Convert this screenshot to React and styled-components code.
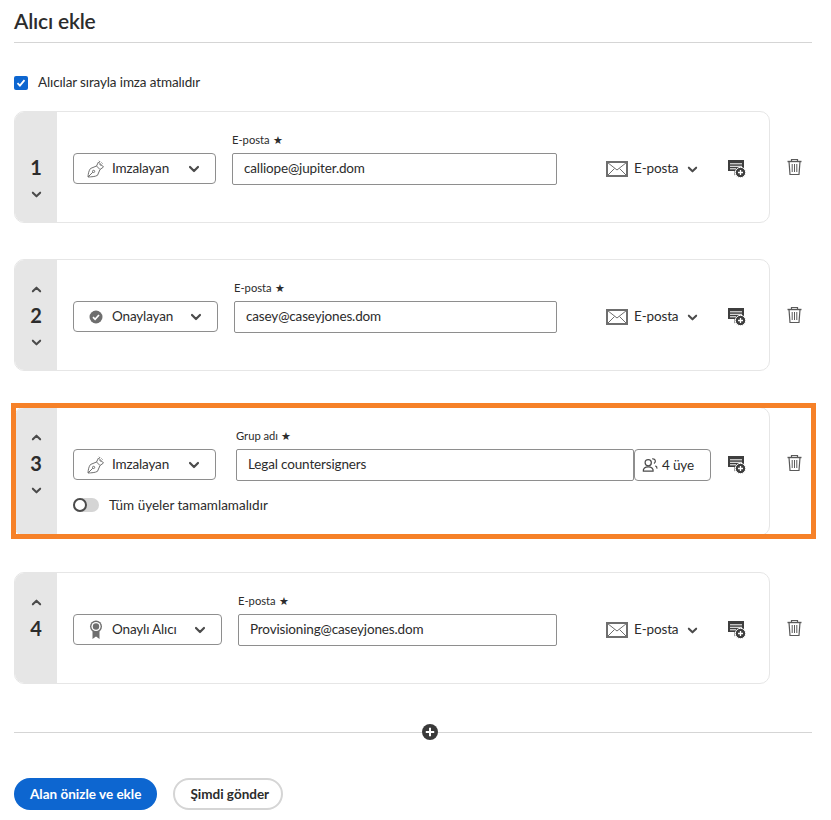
import React from "react";
import styled, { createGlobalStyle } from "styled-components";

const GlobalStyle = createGlobalStyle`
  html, body {
    margin: 0;
    padding: 0;
    background: #fff;
  }
  body {
    font-family: "Lato", "Open Sans", sans-serif;
    color: #2c2c2c;
  }
`;

const Page = styled.div`
  width: 798px;
  height: 820px;
  padding: 0 19px 0 14px;
  overflow: hidden;
`;

const Title = styled.h1`
  margin: 0;
  padding-top: 8px;
  box-sizing: border-box;
  height: 43px;
  font-size: 21px;
  line-height: 26px;
  font-weight: 600;
  letter-spacing: -0.2px;
  color: #2c2c2c;
  border-bottom: 1px solid #d5d5d5;
`;

const SequenceRow = styled.label`
  display: flex;
  align-items: center;
  gap: 10px;
  height: 20px;
  margin-top: 30px;
  font-size: 13.5px;
  letter-spacing: -0.13px;
`;

const SequenceText = styled.span`
  padding-bottom: 2px;
`;

const CheckBox = styled.span`
  width: 14px;
  height: 14px;
  border-radius: 2px;
  background: #0d66d0;
  display: flex;
  align-items: center;
  justify-content: center;
`;

const RecipientList = styled.div`
  display: flex;
  flex-direction: column;
  gap: 36px;
  margin-top: 18px;
`;

const Row = styled.div`
  position: relative;
  display: flex;
  align-items: stretch;
`;

const Highlight = styled.div`
  position: absolute;
  left: -3px;
  top: -4px;
  width: 805px;
  bottom: -3px;
  border: 5px solid #f68128;
  box-sizing: border-box;
  pointer-events: none;
`;

const Card = styled.div`
  width: 756px;
  min-height: 112px;
  box-sizing: border-box;
  display: flex;
  border: 1px solid #e6e6e6;
  border-radius: 10px;
  overflow: hidden;
  background: #fff;
`;

const Rail = styled.div`
  width: 42px;
  flex: none;
  background: #e6e6e6;
  display: grid;
  grid-template-rows: 18px 36px 16px;
  justify-items: center;
  align-items: center;
  align-content: start;
  padding-top: 19px;
`;

const OrderNumber = styled.div`
  font-size: 20px;
  font-weight: 700;
  line-height: 36px;
  color: #2c2c2c;
`;

const Body = styled.div`
  flex: 1;
  display: flex;
  flex-direction: column;
  padding: 21px 0 22px 16px;
`;

const Fields = styled.div`
  display: flex;
  align-items: flex-end;
`;

const RoleSelect = styled.div`
  width: ${(p) => p.$width}px;
  height: 31px;
  flex: none;
  box-sizing: border-box;
  margin: 0 ${(p) => p.$gap}px 1px 0;
  border: 1px solid #8e8e8e;
  border-radius: 4px;
  display: flex;
  align-items: center;
  padding: 0 15px 0 13px;
  font-size: 13.5px;
  letter-spacing: -0.15px;
`;

const RoleIcon = styled.span`
  width: 18px;
  height: 18px;
  display: flex;
  align-items: center;
  justify-content: center;
  margin-right: 7px;
`;

const RoleLabel = styled.span`
  flex: 1;
  padding-bottom: 2px;
`;

const Field = styled.div`
  width: ${(p) => p.$width}px;
  flex: none;
  display: flex;
  flex-direction: column;
`;

const FieldLabel = styled.div`
  height: 20px;
  line-height: 14px;
  font-size: 11.2px;
  color: #2c2c2c;
`;

const Required = styled.span`
  margin-left: 3px;
  font-size: 11px;
`;

const TextInput = styled.div`
  height: 32px;
  box-sizing: border-box;
  border: 1px solid #8e8e8e;
  border-radius: 2px;
  display: flex;
  align-items: center;
  padding: 0 11px 3px;
  font-size: 13.5px;
  letter-spacing: -0.15px;
`;

const MembersButton = styled.div`
  width: 77px;
  height: 32px;
  flex: none;
  box-sizing: border-box;
  border: 1px solid #8e8e8e;
  border-radius: 4px;
  display: flex;
  align-items: center;
  gap: 4px;
  padding-left: 7px;
  font-size: 13.5px;
  letter-spacing: -0.15px;
`;

const ChannelMenu = styled.div`
  width: 122px;
  height: 32px;
  flex: none;
  margin-left: 49px;
  display: flex;
  align-items: center;
  font-size: 13.5px;
  letter-spacing: -0.15px;
`;

const ChannelLabel = styled.span`
  margin: 0 9px 0 6px;
  padding-bottom: 3px;
`;

const NoteButton = styled.div`
  height: 32px;
  flex: none;
  display: flex;
  align-items: center;
  margin-left: ${(p) => p.$left}px;
`;

const ToggleRow = styled.div`
  display: flex;
  align-items: center;
  gap: 10px;
  margin-top: 16px;
  height: 16px;
  font-size: 13.5px;
`;

const ToggleTrack = styled.span`
  position: relative;
  display: block;
  width: 26px;
  height: 14px;
  border-radius: 7px;
  background: #d5d5d5;
`;

const ToggleKnob = styled.span`
  position: absolute;
  left: 0;
  top: 0;
  width: 14px;
  height: 14px;
  box-sizing: border-box;
  border-radius: 50%;
  border: 2px solid #4b4b4b;
  background: #fff;
`;

const DeleteColumn = styled.div`
  margin-left: 17px;
  padding-top: 47px;
`;

const AddRow = styled.div`
  display: flex;
  align-items: center;
  height: 22px;
  margin-top: 37px;
`;

const AddLine = styled.div`
  flex: ${(p) => (p.$width ? `0 0 ${p.$width}px` : "1")};
  height: 1px;
  background: #d5d5d5;
`;

const AddButton = styled.div`
  width: 16px;
  height: 16px;
  display: flex;
  background: #fff;
`;

const Actions = styled.div`
  display: flex;
  gap: 16px;
  margin-top: 35px;
`;

const PrimaryButton = styled.div`
  height: 32px;
  box-sizing: border-box;
  padding: 0 16px;
  border-radius: 16px;
  background: #0d66d0;
  color: #fff;
  font-size: 13.5px;
  font-weight: 700;
  display: flex;
  align-items: center;
`;

const SecondaryButton = styled.div`
  height: 32px;
  box-sizing: border-box;
  padding: 0 12px 0 15px;
  border-radius: 16px;
  border: 2px solid #d5d5d5;
  color: #2c2c2c;
  font-size: 13.5px;
  font-weight: 700;
  display: flex;
  align-items: center;
`;

const Chevron = ({ up, size = 11 }) => (
  <svg width={size} height={size} viewBox="0 0 12 12" fill="none">
    <path
      d={up ? "M2 8l4-4 4 4" : "M2 4l4 4 4-4"}
      stroke="#4b4b4b"
      strokeWidth="2.200"
      strokeLinecap="round"
      strokeLinejoin="round"
    />
  </svg>
);

const PenIcon = () => (
  <svg width="18" height="18" viewBox="0 0 18 18" fill="none" stroke="#707070" strokeWidth="1" strokeLinejoin="round">
    <path d="M1 17c.2-3.500.8-6.300 2.500-8.500L9.500 6l3.500 3.500-2.500 5.800C8 16.800 4.500 16.800 1 17z" />
    <path d="M1 17l4.800-4.800" />
    <circle cx="6.600" cy="11.400" r="1.100" />
    <path d="M9.500 6l2-4 5 5-3.500 2.500" />
    <path d="M12.500 4l2 2" />
    <path d="M12 .8l1.200 1.200M14.500 2.500l1 1" />
  </svg>
);

const ApproverIcon = () => (
  <svg width="14" height="14" viewBox="0 0 14 14">
    <circle cx="7" cy="7" r="6.500" fill="#6e6e6e" />
    <path d="M4 7.200l2.100 2.100L10 5" fill="none" stroke="#fff" strokeWidth="1.700" />
  </svg>
);

const CertifiedIcon = () => (
  <svg width="14" height="20" viewBox="0 0 14 20">
    <path d="M3.500 11v8l3.500-2.500 3.500 2.500v-8z" fill="#6e6e6e" />
    <circle cx="7" cy="6.500" r="6" fill="#6e6e6e" />
    <circle cx="7" cy="6.500" r="4.600" fill="#fff" />
    <circle cx="7" cy="6.500" r="3.200" fill="#6e6e6e" />
  </svg>
);

const MailIcon = () => (
  <svg width="22" height="16" viewBox="0 0 22 16" fill="none">
    <rect x="1" y="1" width="20" height="14" fill="#fff" stroke="#6e6e6e" strokeWidth="2" />
    <path d="M1.500 1.500l9.500 7.500 9.500-7.500M1.500 14.500l7-7M20.500 14.500l-7-7" stroke="#6e6e6e" strokeWidth="1" />
  </svg>
);

const NoteAddIcon = () => (
  <svg width="18" height="18" viewBox="0 0 18 18">
    <path d="M0 0h16v11h-5.500L6.500 15.500V11H0z" fill="#3e3e3e" />
    <path d="M2 3.800h12M2 6.300h12M2 8.800h6" stroke="#fff" strokeWidth="1" />
    <circle cx="12.500" cy="12.500" r="5.200" fill="#3e3e3e" stroke="#fff" strokeWidth="1" />
    <path d="M10 12.500h5M12.500 10v5" stroke="#fff" strokeWidth="1.300" />
  </svg>
);

const TrashIcon = () => (
  <svg width="15" height="18" viewBox="0 0 15 18" fill="none" stroke="#5a5a5a">
    <path d="M.5 3.500h14" strokeWidth="1.400" />
    <path d="M4.500 3.500V1.500h6v2" strokeWidth="1.200" />
    <path d="M2 3.500l1 13h9l1-13" strokeWidth="1.200" />
    <path d="M5.200 6v8M7.500 6v8M9.800 6v8" strokeWidth="1" />
  </svg>
);

const UsersIcon = () => (
  <svg width="16" height="16" viewBox="0 0 18 18" fill="none" stroke="#4b4b4b" strokeWidth="1.400">
    <circle cx="7" cy="6.500" r="3.500" />
    <path d="M1.500 16c-.5-3.200 2-5 5.500-5s6 1.800 5.500 5z" />
    <path d="M11.500 2.200a2.800 2.800 0 0 1 3.500 2.600c0 1.200-.7 2-1.600 2.500" />
    <path d="M15 10c1.300.5 2 1.500 1.800 3" />
  </svg>
);

const PlusCircle = () => (
  <svg width="16" height="16" viewBox="0 0 16 16">
    <circle cx="8" cy="8" r="8" fill="#3a3a3a" />
    <path d="M8 3.800v8.400M3.800 8h8.400" stroke="#fff" strokeWidth="2" />
  </svg>
);

const roleIcons = {
  signer: <PenIcon />,
  approver: <ApproverIcon />,
  certified: <CertifiedIcon />,
};

const recipients = [
  { id: 1, role: "Imzalayan", icon: "signer", selectWidth: 143, gap: 16, fieldWidth: 325, label: "E-posta", value: "calliope@jupiter.dom", down: true },
  { id: 2, role: "Onaylayan", icon: "approver", selectWidth: 145, gap: 16, fieldWidth: 323, label: "E-posta", value: "casey@caseyjones.dom", up: true, down: true },
  { id: 3, role: "Imzalayan", icon: "signer", selectWidth: 143, gap: 20, fieldWidth: 398, label: "Grup adı", value: "Legal countersigners", up: true, down: true, group: true },
  { id: 4, role: "Onaylı Alıcı", icon: "certified", selectWidth: 149, gap: 16, fieldWidth: 319, label: "E-posta", value: "Provisioning@caseyjones.dom", up: true },
];

const Recipient = ({ r }) => (
  <Row>
    <Card>
      <Rail>
        <span>{r.up && <Chevron up />}</span>
        <OrderNumber>{r.id}</OrderNumber>
        <span>{r.down && <Chevron />}</span>
      </Rail>
      <Body>
        <Fields>
          <RoleSelect $width={r.selectWidth} $gap={r.gap}>
            <RoleIcon>{roleIcons[r.icon]}</RoleIcon>
            <RoleLabel>{r.role}</RoleLabel>
            <Chevron size={12} />
          </RoleSelect>
          <Field $width={r.fieldWidth}>
            <FieldLabel>
              {r.label}
              <Required>★</Required>
            </FieldLabel>
            <TextInput>{r.value}</TextInput>
          </Field>
          {r.group ? (
            <>
              <MembersButton>
                <UsersIcon />4 üye
              </MembersButton>
              <NoteButton $left={17}>
                <NoteAddIcon />
              </NoteButton>
            </>
          ) : (
            <>
              <ChannelMenu>
                <MailIcon />
                <ChannelLabel>E-posta</ChannelLabel>
                <Chevron size={11} />
              </ChannelMenu>
              <NoteButton $left={0}>
                <NoteAddIcon />
              </NoteButton>
            </>
          )}
        </Fields>
        {r.group && (
          <ToggleRow>
            <ToggleTrack>
              <ToggleKnob />
            </ToggleTrack>
            Tüm üyeler tamamlamalıdır
          </ToggleRow>
        )}
      </Body>
    </Card>
    <DeleteColumn>
      <TrashIcon />
    </DeleteColumn>
    {r.group && <Highlight />}
  </Row>
);

export default function App() {
  return (
    <Page>
      <GlobalStyle />
      <Title>Alıcı ekle</Title>
      <SequenceRow>
        <CheckBox>
          <svg width="10" height="10" viewBox="0 0 10 10" fill="none">
            <path d="M1.500 5.200l2.400 2.400L8.500 2.200" stroke="#fff" strokeWidth="1.800" />
          </svg>
        </CheckBox>
        <SequenceText>Alıcılar sırayla imza atmalıdır</SequenceText>
      </SequenceRow>
      <RecipientList>
        {recipients.map((r) => (
          <Recipient key={r.id} r={r} />
        ))}
      </RecipientList>
      <AddRow>
        <AddLine $width={408} />
        <AddButton>
          <PlusCircle />
        </AddButton>
        <AddLine />
      </AddRow>
      <Actions>
        <PrimaryButton>Alan önizle ve ekle</PrimaryButton>
        <SecondaryButton>Şimdi gönder</SecondaryButton>
      </Actions>
    </Page>
  );
}
